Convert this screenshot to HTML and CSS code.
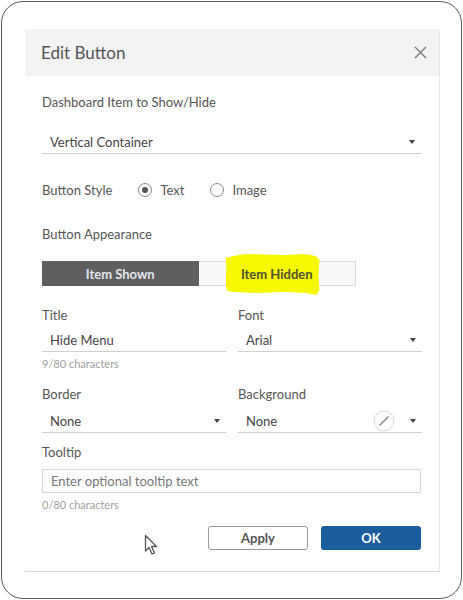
FILE: index.html
```html
<!DOCTYPE html>
<html lang="en">

<head>
    <meta charset="utf-8">
    <meta name="viewport" content="width=device-width, initial-scale=1.0">
    <title>Edit Button</title>
    <link rel="stylesheet" href="styles.css">
</head>

<body>
    <div class="frame">
        <section class="dialog">
            <header class="dialog-head">
                <h1>Edit Button</h1>
                <svg class="close" width="13" height="13" viewBox="0 0 13 13">
                    <path d="M1 1 L12 12 M12 1 L1 12" stroke="#777" stroke-width="1.3" fill="none" />
                </svg>
            </header>

            <div class="dialog-body">
                <p class="label first">Dashboard Item to Show/Hide</p>
                <div class="select wide">
                    <span>Vertical Container</span>
                    <span class="caret"></span>
                </div>

                <div class="style-row">
                    <span class="label">Button Style</span>
                    <label class="radio"><span class="dot checked"></span>Text</label>
                    <label class="radio"><span class="dot"></span>Image</label>
                </div>

                <p class="label appearance">Button Appearance</p>
                <div class="toggle">
                    <span class="seg shown">Item Shown</span>
                    <span class="seg hidden">
                        <span class="marker"></span>
                        <span class="seg-text">Item Hidden</span>
                    </span>
                </div>

                <div class="cols title-row">
                    <div>
                        <p class="label">Title</p>
                        <div class="select">
                            <span>Hide Menu</span>
                        </div>
                        <p class="count">9/80 characters</p>
                    </div>
                    <div>
                        <p class="label">Font</p>
                        <div class="select">
                            <span>Arial</span>
                            <span class="caret"></span>
                        </div>
                    </div>
                </div>

                <div class="cols border-row">
                    <div>
                        <p class="label">Border</p>
                        <div class="select">
                            <span>None</span>
                            <span class="caret"></span>
                        </div>
                    </div>
                    <div>
                        <p class="label">Background</p>
                        <div class="select">
                            <span>None</span>
                            <span class="color-pick">
                                <svg width="22" height="22" viewBox="0 0 22 22">
                                    <circle cx="11" cy="11" r="10" stroke="#d6d6d6" stroke-width="1" fill="#fff" />
                                    <path d="M6.5 15.5 L15.5 6.5" stroke="#888" stroke-width="1.4" />
                                </svg>
                                <span class="caret"></span>
                            </span>
                        </div>
                    </div>
                </div>

                <p class="label tooltip-label">Tooltip</p>
                <div class="text-input">Enter optional tooltip text</div>
                <p class="count">0/80 characters</p>

                <footer class="actions">
                    <svg class="pointer" width="14" height="22" viewBox="0 0 14 22">
                        <path d="M1.5 1.5 L1.5 17 L5 13.5 L8 20 L10.5 19 L7.5 12.5 L12.5 12.5 Z" fill="#fff" stroke="#555" stroke-width="1.3" stroke-linejoin="round" />
                    </svg>
                    <button class="btn apply">Apply</button>
                    <button class="btn ok">OK</button>
                </footer>
            </div>
        </section>
    </div>
</body></html>
```

FILE: styles.css
```css
* {
    margin: 0;
    padding: 0;
    box-sizing: border-box;
}

body {
    background-color: #fff;
    font-family: Lato, "Liberation Sans", sans-serif;
    color: #555;
}

.frame {
    width: 461px;
    height: 598px;
    margin: 1px;
    border: 1.5px solid #5a5a5a;
    border-radius: 22px;
    padding: 27px 0 0 23px;
}

.dialog {
    width: 415px;
    height: 543px;
    border-right: 1px solid #e8e8e8;
    border-bottom: 1px solid #d8d8d8;
}

.dialog-head {
    height: 47px;
    background-color: #f3f3f3;
    display: flex;
    align-items: center;
    justify-content: space-between;
    padding: 0 12px 0 16px;
}

h1 {
    font-size: 17px;
    font-weight: 400;
    color: #555;
}

.dialog-body {
    padding: 0 18px 0 17px;
}

.label {
    font-size: 13px;
    line-height: 16px;
    color: #555;
}

.first {
    margin-top: 18px;
}

.select {
    height: 24px;
    border-bottom: 1px solid #cfcfcf;
    display: flex;
    align-items: center;
    justify-content: space-between;
    padding: 0 6px 0 8px;
    font-size: 13px;
    color: #444;
    margin-top: 5px;
}

.select.wide {
    margin-top: 20px;
}

.border-row .select {
    height: 26px;
    padding-top: 2px;
}

.caret {
    width: 0;
    height: 0;
    border-left: 3.5px solid transparent;
    border-right: 3.5px solid transparent;
    border-top: 4px solid #444;
}

.style-row {
    margin-top: 26px;
    height: 20px;
    display: flex;
    align-items: center;
}

.radio {
    display: flex;
    align-items: center;
    font-size: 13px;
    color: #555;
    margin-left: 26px;
}

.dot {
    width: 14px;
    height: 14px;
    border: 1px solid #888;
    border-radius: 50%;
    margin-right: 8px;
    display: flex;
    align-items: center;
    justify-content: center;
}

.dot.checked::after {
    content: "";
    width: 6px;
    height: 6px;
    border-radius: 50%;
    background-color: #555;
}

.appearance {
    margin-top: 26px;
}

.toggle {
    margin-top: 19px;
    width: 314px;
    height: 25px;
    display: flex;
    font-size: 13px;
    font-weight: 700;
}

.seg {
    flex: 1;
    display: flex;
    align-items: center;
    justify-content: center;
}

.shown {
    background-color: #5f5f5f;
    color: #e2e6ee;
}

.hidden {
    position: relative;
    background-color: #f8f8f8;
    border: 1px solid #dcdcdc;
    border-left: none;
    color: #505030;
}

/* yellow marker stroke over the second segment */
.marker {
    position: absolute;
    left: 27px;
    top: -8px;
    width: 94px;
    height: 41px;
    background-color: #f7f700;
    clip-path: polygon(0 4px, 8px 2px, 20px 0, 60px 1px, 80px 0, 90px 2px, 94px 6px, 93px 20px, 94px 36px, 91px 41px, 80px 39px, 60px 38px, 30px 39px, 10px 38px, 2px 37px, 0 30px, 1px 15px);
}

.seg-text {
    position: relative;
}

.cols {
    display: grid;
    grid-template-columns: 184px 184px;
    column-gap: 12px;
}

.title-row {
    margin-top: 21px;
}

.count {
    margin-top: 5px;
    font-size: 11px;
    line-height: 14px;
    color: #a0a0a0;
}

.border-row {
    margin-top: 15px;
}

.color-pick {
    display: flex;
    align-items: center;
    gap: 15px;
}

.tooltip-label {
    margin-top: 11px;
}

.text-input {
    margin-top: 9px;
    height: 24px;
    border: 1px solid #d6d6d6;
    padding: 0 8px;
    display: flex;
    align-items: center;
    font-size: 13px;
    color: #777;
}

.actions {
    position: relative;
    margin-top: 14px;
    display: flex;
    justify-content: flex-end;
    gap: 13px;
}

.pointer {
    position: absolute;
    left: 102px;
    top: 8px;
}

.btn {
    width: 100px;
    height: 24px;
    border-radius: 3px;
    font-family: Lato, "Liberation Sans", sans-serif;
    font-size: 13px;
    font-weight: 700;
}

.apply {
    background-color: #fff;
    border: 1.5px solid #999;
    color: #555;
}

.ok {
    background-color: #1b5d9d;
    border: none;
    color: #fff;
}
```
